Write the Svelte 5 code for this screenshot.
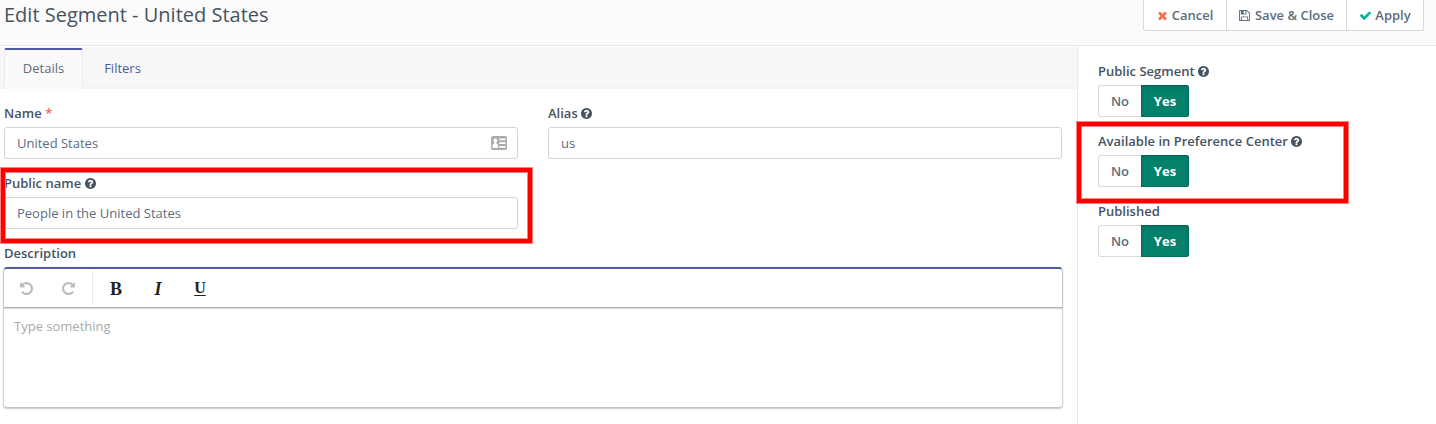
<script>
  const paths = {
    help: 'M1024 1376v-192q0-14-9-23t-23-9h-192q-14 0-23 9t-9 23v192q0 14 9 23t23 9h192q14 0 23-9t9-23zm256-672q0-88-55.5-163t-138.5-116-170-41q-243 0-371 213-15 24 8 42l132 100q7 6 19 6 16 0 25-12 53-68 86-92 34-24 86-24 48 0 85.5 26t37.5 59q0 38-20 61t-68 45q-63 28-115.5 86.5t-52.5 125.5v36q0 14 9 23t23 9h192q14 0 23-9t9-23q0-19 21.5-49.5t54.5-49.5q32-18 49-28.5t46-35 44.5-48 28-60.5 12.5-81zm384 192q0 209-103 385.5t-279.5 279.5-385.5 103-385.5-103-279.5-279.5-103-385.5 103-385.5 279.5-279.5 385.5-103 385.5 103 279.5 279.5 103 385.5z',
    times: 'M1490 1322q0 40-28 68l-136 136q-28 28-68 28t-68-28l-294-294-294 294q-28 28-68 28t-68-28l-136-136q-28-28-28-68t28-68l294-294-294-294q-28-28-28-68t28-68l136-136q28-28 68-28t68 28l294 294 294-294q28-28 68-28t68 28l136 136q28 28 28 68t-28 68l-294 294 294 294q28 28 28 68z',
    check: 'M1671 566q0 40-28 68l-724 724-136 136q-28 28-68 28t-68-28l-136-136-362-362q-28-28-28-68t28-68l136-136q28-28 68-28t68 28l294 295 656-657q28-28 68-28t68 28l136 136q28 28 28 68z',
    save: 'M512 1536h768v-384h-768v384zm896 0h128v-896q0-14-10-38.5t-20-34.5l-281-281q-10-10-34-20t-39-10v416q0 40-28 68t-68 28h-576q-40 0-68-28t-28-68v-416h-128v1280h128v-416q0-40 28-68t68-28h832q40 0 68 28t28 68v416zm-384-928v-320q0-13-9.5-22.5t-22.5-9.5h-192q-13 0-22.5 9.5t-9.5 22.5v320q0 13 9.5 22.5t22.5 9.5h192q13 0 22.5-9.5t9.5-22.5zm640 32v928q0 40-28 68t-68 28h-1344q-40 0-68-28t-28-68v-1344q0-40 28-68t68-28h928q40 0 88 20t76 48l280 280q28 28 48 76t20 88z',
    undo: 'M1664 896q0 156-61 298t-164 245-245 164-298 61q-172 0-327-72.5t-264-204.5q-7-10-6.5-22.5t8.5-20.5l137-138q10-9 25-9 16 2 23 12 73 95 179 147t225 52q104 0 198.5-40.5t163.5-109.5 109.5-163.5 40.5-198.5-40.5-198.5-109.5-163.5-163.5-109.5-198.5-40.5q-98 0-188 35.5t-160 101.5l137 138q31 30 14 69-17 40-59 40h-448q-26 0-45-19t-19-45v-448q0-42 40-59 39-17 69 14l130 129q107-101 244.5-156.5t284.5-55.5q156 0 298 61t245 164 164 245 61 298z'
  };
  const toggles = [
    { label: 'Public Segment', help: true },
    { label: 'Available in Preference Center', help: true, marked: true },
    { label: 'Published', help: false }
  ];
</script>

{#snippet icon(name, cls)}
  <svg class="icon {cls}" viewBox="128 128 1536 1536" aria-hidden="true"><path d={paths[name]} /></svg>
{/snippet}

<div class="page">
  <header>
    <h1>Edit Segment - United States</h1>
    <div class="actions">
      <button class="cancel">{@render icon('times', 'red')}Cancel</button>
      <button class="save">{@render icon('save', '')}Save &amp; Close</button>
      <button class="apply">{@render icon('check', 'green')}Apply</button>
    </div>
  </header>
  <div class="body">
    <main>
      <nav>
        <span class="tab active">Details</span>
        <span class="tab">Filters</span>
      </nav>
      <div class="form">
        <div class="field">
          <div class="label">Name <b class="star">*</b></div>
          <div class="input">
            <span>United States</span>
            <svg class="card" viewBox="0 0 16 14"><rect width="16" height="14" rx="2" fill="#aaa" /><circle cx="4.3" cy="4.3" r="1.9" fill="#fff" /><path d="M3.2 5h2.2v2.5l1.7 1.2V12H1.5V8.7l1.7-1.2zM8.3 2.4h6.2v1.8H8.3zM8.3 6.2h6.2V8H8.3zM8.3 10h6.2v1.8H8.3z" fill="#fff" /></svg>
          </div>
        </div>
        <div class="field">
          <div class="label">Alias {@render icon('help', 'help')}</div>
          <div class="input"><span>us</span></div>
        </div>
        <div class="field marked-name">
          <div class="label">Public name {@render icon('help', 'help')}</div>
          <div class="input"><span>People in the United States</span></div>
        </div>
        <div class="field wide">
          <div class="label">Description</div>
          <div class="editor">
            <div class="toolbar">
              <div class="history">
                {@render icon('undo', 'tool')}
                {@render icon('undo', 'tool flip')}
              </div>
              <span class="fmt">B</span>
              <span class="fmt italic">I</span>
              <span class="fmt under">U</span>
            </div>
            <div class="area">Type something</div>
          </div>
        </div>
      </div>
    </main>
    <aside>
      {#each toggles as t}
        <div class="option" class:marked={t.marked}>
          <div class="label">{t.label} {#if t.help}{@render icon('help', 'help')}{/if}</div>
          <div class="toggle"><span class="no">No</span><span class="yes">Yes</span></div>
        </div>
      {/each}
    </aside>
  </div>
</div>

<style>
  :global(body) { margin: 0; background: #fff; }
  *, ::after { box-sizing: border-box; }
  .page { width: 1436px; height: 424px; overflow: hidden; display: flex; flex-direction: column; font: 13px/20px "Open Sans", sans-serif; color: #5d6c7c; }
  header { height: 46px; flex: none; display: flex; justify-content: space-between; background: #fbfbfb; border-bottom: 1px solid #e6e8e8; padding: 0 12px 0 4px; }
  h1 { margin: 0; font-size: 20px; line-height: 29px; font-weight: 400; color: #47535f; white-space: nowrap; }
  .actions { display: flex; height: 31px; background: #fff; border: 1px solid #d9d9d9; border-top: 0; border-radius: 0 0 3px 3px; }
  button { font: 600 13px/18px "Open Sans", sans-serif; color: #5d6c7c; background: none; border: 0; padding: 0; display: flex; align-items: center; justify-content: center; white-space: nowrap; }
  button + button { border-left: 1px solid #d9d9d9; }
  .cancel { width: 82px; }
  .save { width: 120px; }
  .apply { width: 77px; }
  button .icon { margin-right: 4px; overflow: visible; }
  .icon { width: 11px; height: 11px; fill: currentColor; flex: none; }
  .save .icon { margin-right: 5px; }
  .apply { padding-left: 1px; }
  .red { color: #f86b4f; }
  .green { color: #00b49c; }
  .body { flex: 1; display: flex; }
  main { width: 1077px; }
  nav { height: 42px; margin-top: 1px; background: linear-gradient(#f7f7f7 37px, #f2f2f2); display: flex; padding: 1px 0 0 4px; }
  .tab { width: 79px; line-height: 41px; text-align: center; color: #4e5d9d; }
  .active { color: #5d6c7c; background: #fafafa; border: solid #e9eaee; border-width: 0 1px; border-top: 2px solid #4e5d9d; border-radius: 2px 2px 0 0; line-height: 37px; }
  .form { padding: 14px 15px 0 4px; display: grid; grid-template-columns: 514px 514px; column-gap: 30px; row-gap: 14px; }
  .field { position: relative; }
  .wide { grid-column: 1 / 3; }
  .label { height: 20px; line-height: 20px; font-weight: 600; color: #47535f; display: flex; align-items: center; white-space: nowrap; gap: 3.5px; }
  .star { color: #f86b4f; font-weight: 600; }
  .input { height: 32px; margin-top: 4px; border: 1px solid #d3d3d3; border-radius: 3px; display: flex; align-items: center; justify-content: space-between; padding: 0 10px 0 12px; }
  .card { width: 16px; height: 14px; }
  .marked-name::after, .marked::after { content: ""; position: absolute; z-index: 1; border: 4px solid red; box-shadow: 0 0 0 1px #ff8080, inset 0 0 0 1px #ff8080; pointer-events: none; }
  .marked-name::after { left: -3px; top: -5px; width: 531px; height: 75px; }
  .editor { margin-top: 4px; height: 140px; border-top: 2px solid #4e5d9d; border-radius: 3px; box-shadow: 0 1px 3px rgba(0,0,0,.16), 0 1px 1px 1px rgba(0,0,0,.14); }
  .toolbar { height: 38px; display: flex; align-items: center; box-shadow: 0 1px 1px rgba(0,0,0,.2), 0 2px 1px rgba(0,0,0,.12); }
  .history { width: 89px; height: 34px; display: flex; align-items: center; gap: 29px; padding-left: 16px; padding-top: 1px; border-right: 1px solid #ebebeb; }
  .tool { width: 13px; height: 13px; color: #bdbdbd; }
  .flip { transform: scaleX(-1); }
  .fmt { width: 42px; text-align: center; font: 700 18px/24px "Liberation Serif", serif; color: #222; padding-left: 4px; padding-top: 1px; }
  .italic { font-style: italic; }
  .under { font-size: 16px; line-height: 22px; font-weight: 700; text-decoration: underline; text-underline-offset: 2px; text-decoration-thickness: 1px; padding-bottom: 2px; }
  .area { padding: 10px; line-height: 18px; color: #aaa; }
  aside { flex: 1; border-left: 1px solid #e9e9e9; padding: 15px 20px; display: flex; flex-direction: column; gap: 14px; }
  .option { height: 56px; position: relative; }
  .marked::after { left: -21px; top: -9px; width: 271px; height: 81px; }
  .toggle { width: 91px; height: 32px; margin-top: 4px; display: flex; line-height: 32px; text-align: center; font-weight: 600; }
  .no { width: 43px; border: 1px solid #d9d9d9; border-right: 0; border-radius: 3px 0 0 3px; line-height: 30px; }
  .yes { width: 48px; background: #04806b; color: #fff; font-weight: 700; border-radius: 0 3px 3px 0; box-shadow: inset 0 2px 4px rgba(0,0,0,.13), inset 0 0 0 1px #037560; }
</style>
